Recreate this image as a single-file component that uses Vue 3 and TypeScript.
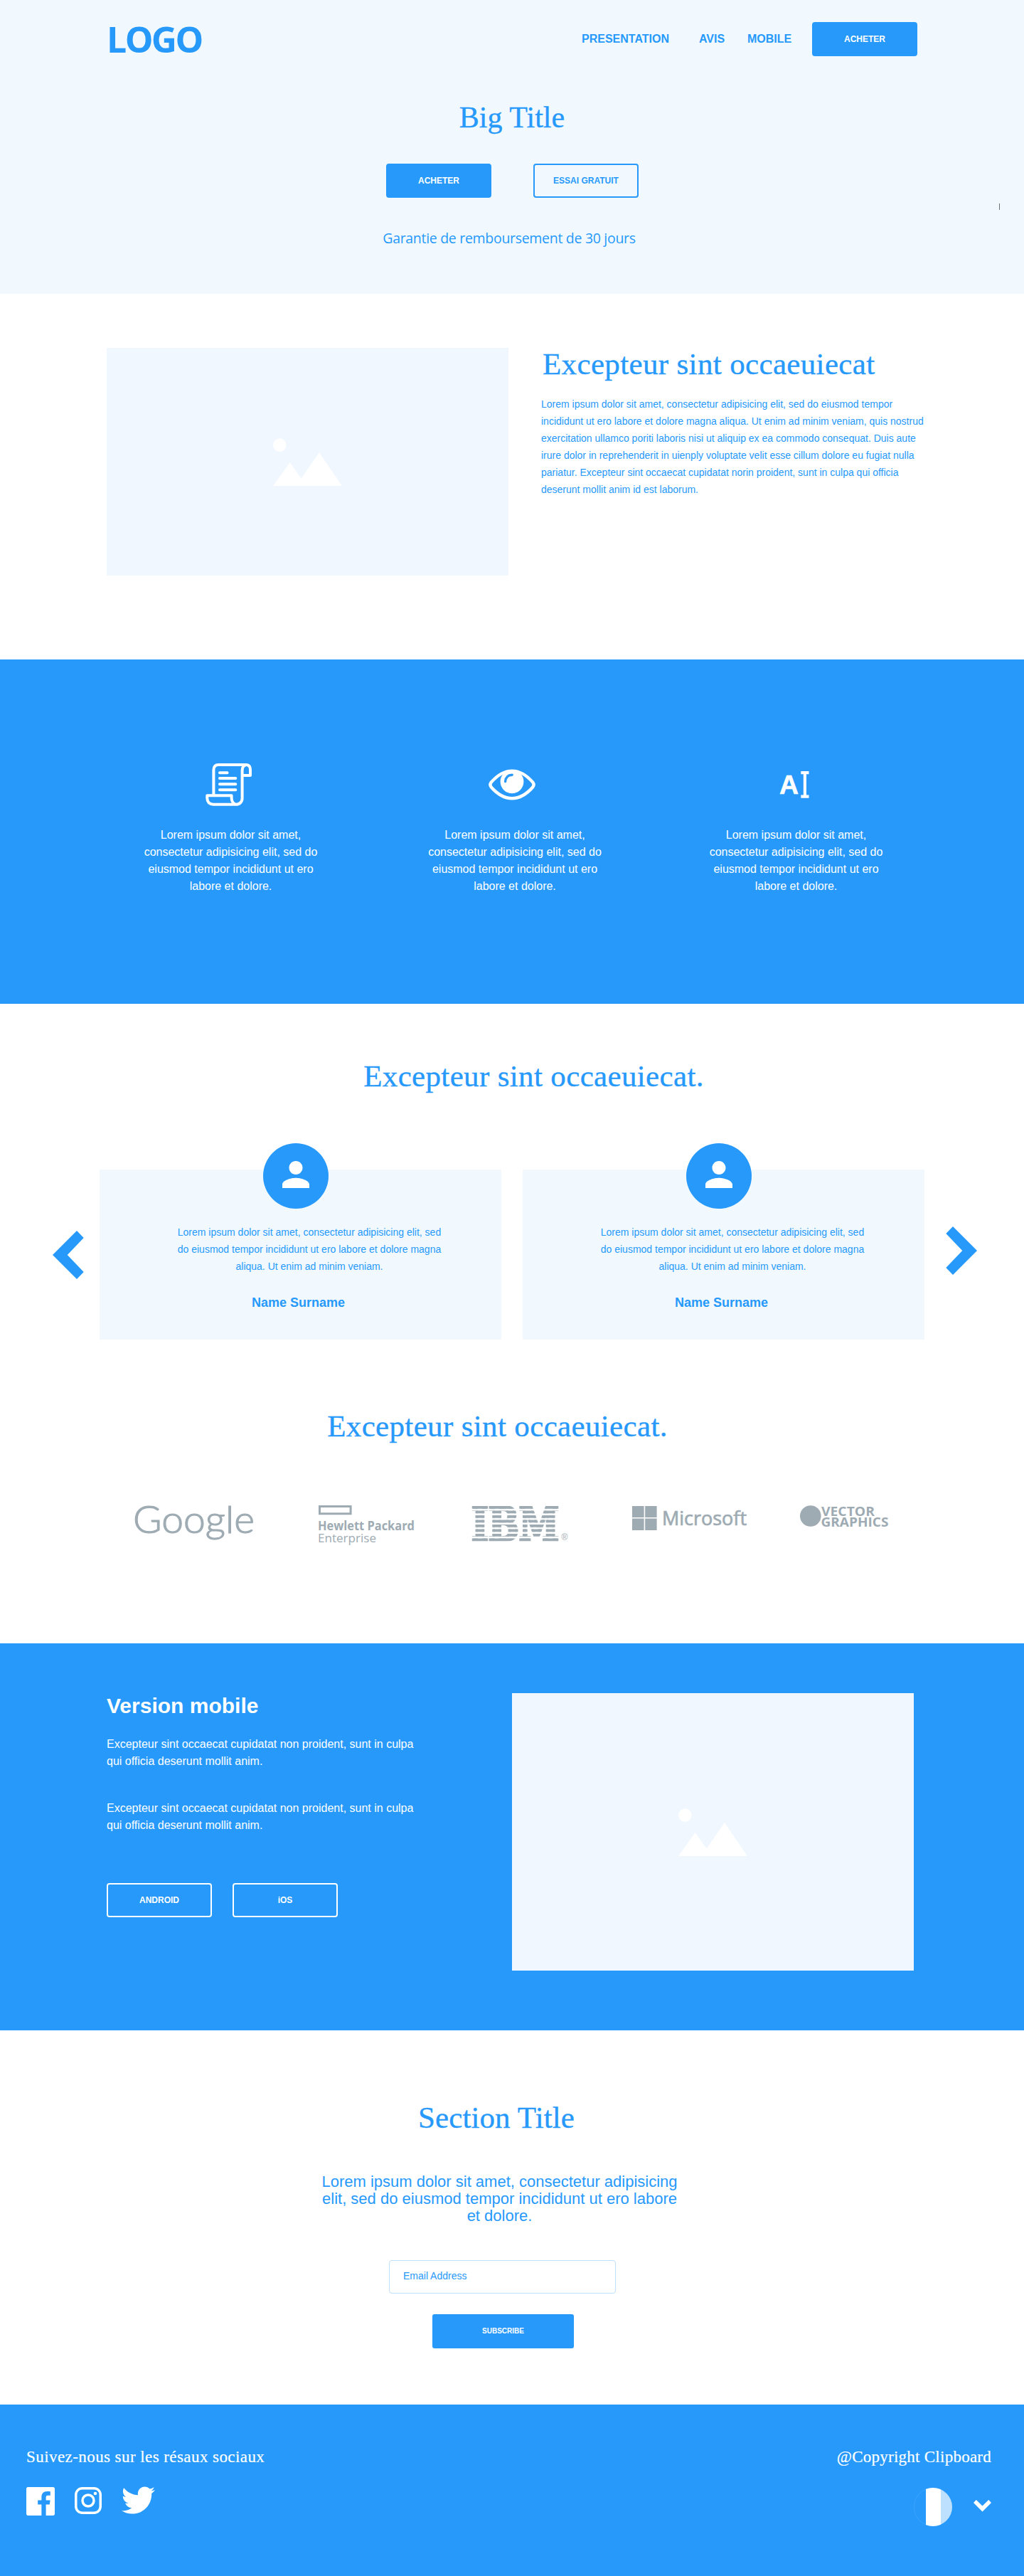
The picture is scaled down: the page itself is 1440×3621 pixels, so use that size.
<script setup lang="ts">
interface Review {
  text: string
  name: string
}

const nav: string[] = ['PRESENTATION', 'AVIS', 'MOBILE']

const intro = [
  'Lorem ipsum dolor sit amet, consectetur adipisicing elit, sed do eiusmod tempor',
  'incididunt ut ero labore et dolore magna aliqua. Ut enim ad minim veniam, quis nostrud',
  'exercitation ullamco poriti laboris nisi ut aliquip ex ea commodo consequat. Duis aute',
  'irure dolor in reprehenderit in uienply voluptate velit esse cillum dolore eu fugiat nulla',
  'pariatur. Excepteur sint occaecat cupidatat norin proident, sunt in culpa qui officia',
  'deserunt mollit anim id est laborum.',
].join('\n')

const featureText = [
  'Lorem ipsum dolor sit amet,',
  'consectetur adipisicing elit, sed do',
  'eiusmod tempor incididunt ut ero',
  'labore et dolore.',
].join('\n')

const reviewText = [
  'Lorem ipsum dolor sit amet, consectetur adipisicing elit, sed',
  'do eiusmod tempor incididunt ut ero labore et dolore magna',
  'aliqua. Ut enim ad minim veniam.',
].join('\n')

const reviews: Review[] = [
  { text: reviewText, name: 'Name Surname' },
  { text: reviewText, name: 'Name Surname' },
]

const mobileText = 'Excepteur sint occaecat cupidatat non proident, sunt in culpa\nqui officia deserunt mollit anim.'

const newsletterText = [
  'Lorem ipsum dolor sit amet, consectetur adipisicing',
  'elit, sed do eiusmod tempor incididunt ut ero labore',
  'et dolore.',
].join('\n')
</script>

<template>
  <div class="page">
    <header class="hero">
      <nav class="nav">
        <span class="logo">LOGO</span>
        <a v-for="item in nav" :key="item" class="nav-link">{{ item }}</a>
        <button class="btn solid">ACHETER</button>
      </nav>
      <h1 class="title big">Big Title</h1>
      <div class="hero-actions">
        <button class="btn solid">ACHETER</button>
        <button class="btn outline">ESSAI GRATUIT</button>
      </div>
      <p class="guarantee">Garantie de remboursement de 30 jours</p>
      <i class="caret"></i>
    </header>

    <section class="intro">
      <div class="placeholder intro-image">
        <svg width="97" height="67" viewBox="0 0 97 67" fill="#fff">
          <circle cx="9.3" cy="9.6" r="9.3" />
          <path d="M0 67 23.6 34 39.6 56.5 64.8 20 97 67z" />
        </svg>
      </div>
      <div class="intro-copy">
        <h2 class="title">Excepteur sint occaeuiecat</h2>
        <p>{{ intro }}</p>
      </div>
    </section>

    <section class="features">
      <article class="feature">
        <div class="feature-icon">
          <svg width="66" height="60" viewBox="0 0 66 60" fill="none" stroke="#fff" stroke-width="4" stroke-linejoin="round">
            <path d="M11.4 44V9.5Q11.4 2 18.5 2H57.5Q63 2.5 63 9V17H53" />
            <path d="M57.5 2Q51.6 3 51.6 10V49A8.5 8.5 0 0 1 43 57.8H11Q2.5 57 2.3 49V45.2H36.6V49Q37 56 43 57.8" />
            <path d="M20 13.2H30.6M20 21H42.3M20 29.2H42.3M20 37.2H42.3" stroke-linecap="round" />
          </svg>
        </div>
        <p>{{ featureText }}</p>
      </article>
      <article class="feature">
        <div class="feature-icon eye">
          <svg width="66" height="44" viewBox="0 0 66 44">
            <path d="M3.6 18.8C13 8 22 2.6 33 2.6S53 8 62.4 18.8Q64.8 22 62.4 25.2C53 36 44 41.2 33 41.2S13 36 3.6 25.2Q1.2 22 3.6 18.8z" fill="none" stroke="#fff" stroke-width="4.4" />
            <circle cx="33" cy="17.8" r="16.4" fill="#fff" />
            <path d="M23.6 17.6Q24.2 8.6 33.2 8.2" fill="none" stroke="#2699fb" stroke-width="3.4" stroke-linecap="round" />
          </svg>
        </div>
        <p>{{ featureText }}</p>
      </article>
      <article class="feature">
        <div class="feature-icon">
          <svg width="42" height="38" viewBox="0 0 42 38" fill="#fff">
            <text x="0" y="32" font-family="Liberation Sans, sans-serif" font-weight="700" font-size="37" stroke="#fff" stroke-width=".6" textLength="27" lengthAdjust="spacingAndGlyphs">A</text>
            <path d="M30.3 0H41.5V4.2H38V33.6H41.5V37.8H30.3V33.6H33.8V4.2H30.3z" />
          </svg>
        </div>
        <p>{{ featureText }}</p>
      </article>
    </section>

    <section class="social-proof">
      <h2 class="title reviews-title">Excepteur sint occaeuiecat.</h2>
      <div class="reviews">
        <svg class="arrow prev" width="44" height="68" viewBox="0 0 44 68" fill="#2699fb"><path d="M34 0 43.7 10 20.7 34 43.7 58 34 68 0 34z" /></svg>
        <article v-for="(review, i) in reviews" :key="i" class="card">
          <div class="avatar">
            <svg width="38" height="38" viewBox="4 4 16 16" fill="#fff"><path d="M12 12c2.21 0 4-1.79 4-4s-1.79-4-4-4-4 1.79-4 4 1.79 4 4 4zm0 2c-2.67 0-8 1.34-8 4v2h16v-2c0-2.66-5.33-4-8-4z" /></svg>
          </div>
          <p class="card-text">{{ review.text }}</p>
          <p class="card-name">{{ review.name }}</p>
        </article>
        <svg class="arrow next" width="44" height="68" viewBox="0 0 44 68" fill="#2699fb"><path d="M10 0 .3 10 23.3 34 .3 58 10 68 44 34z" /></svg>
      </div>

      <h2 class="title brands-title">Excepteur sint occaeuiecat.</h2>
      <div class="brands">
        <svg width="170" height="54" viewBox="0 0 170 54">
          <text x="-3" y="38.5" font-family="Lato, sans-serif" font-weight="300" font-size="54" stroke="#9eabb3" stroke-width="1.1" textLength="171" lengthAdjust="spacingAndGlyphs">Google</text>
        </svg>
        <svg width="140" height="60" viewBox="0 0 140 60">
          <path fill-rule="evenodd" d="M1 0H47.6V13.3H1zM4 3V10.3H44.6V3z" />
          <text x="0" y="35.2" font-family="Open Sans, sans-serif" font-weight="700" font-size="17" textLength="136" lengthAdjust="spacingAndGlyphs">Hewlett Packard</text>
          <text x="0" y="52.3" font-family="Open Sans, sans-serif" font-size="17" textLength="82" lengthAdjust="spacingAndGlyphs">Enterprise</text>
        </svg>
        <svg width="142" height="54" viewBox="0 0 142 54">
          <defs>
            <pattern id="stripes" width="142" height="6.5" patternUnits="userSpaceOnUse" patternTransform="translate(0 1)">
              <rect width="142" height="3.8" />
            </pattern>
          </defs>
          <text x="1" y="48.5" fill="url(#stripes)" stroke="url(#stripes)" stroke-width="4" font-family="DejaVu Serif, serif" font-weight="700" font-size="63.5" textLength="123" lengthAdjust="spacingAndGlyphs">IBM</text>
          <text x="127.5" y="48.5" font-family="Liberation Sans, sans-serif" font-size="12">®</text>
        </svg>
        <svg width="164" height="54" viewBox="0 0 164 54">
          <path d="M0 1H16.6V17H0zM18.2 1H34.6V17H18.2zM0 18.4H16.6V35H0zM18.2 18.4H34.6V35H18.2z" />
          <text x="42" y="28" font-family="Open Sans, sans-serif" font-weight="500" font-size="28" stroke="#9eabb3" stroke-width=".7" textLength="119" lengthAdjust="spacingAndGlyphs">Microsoft</text>
        </svg>
        <svg width="130" height="54" viewBox="0 0 130 54">
          <circle cx="14.8" cy="15" r="14.8" />
          <text x="30" y="14.8" font-family="Open Sans, sans-serif" font-weight="700" font-size="17.4" textLength="75" lengthAdjust="spacingAndGlyphs">VECTOR</text>
          <text x="29.5" y="29.8" font-family="Open Sans, sans-serif" font-weight="700" font-size="17.4" textLength="95" lengthAdjust="spacingAndGlyphs">GRAPHICS</text>
        </svg>
      </div>
    </section>

    <section class="mobile">
      <div class="mobile-copy">
        <h2>Version mobile</h2>
        <p>{{ mobileText }}</p>
        <p>{{ mobileText }}</p>
        <div class="stores">
          <button class="btn ghost">ANDROID</button>
          <button class="btn ghost">iOS</button>
        </div>
      </div>
      <div class="placeholder mobile-image">
        <svg width="97" height="67" viewBox="0 0 97 67" fill="#fff">
          <circle cx="9.3" cy="9.6" r="9.3" />
          <path d="M0 67 23.6 34 39.6 56.5 64.8 20 97 67z" />
        </svg>
      </div>
    </section>

    <section class="newsletter">
      <h2 class="title">Section Title</h2>
      <p>{{ newsletterText }}</p>
      <input class="email" type="email" placeholder="Email Address" />
      <button class="btn solid subscribe">SUBSCRIBE</button>
    </section>

    <footer class="footer">
      <div class="footer-row">
        <span class="follow">Suivez-nous sur les résaux sociaux</span>
        <span>@Copyright Clipboard</span>
      </div>
      <div class="footer-row icons">
        <div class="networks">
          <svg width="40" height="40" viewBox="0 0 24 24" fill="#fff"><path d="M22.676 0H1.324C.593 0 0 .593 0 1.324v21.352C0 23.408.593 24 1.324 24h11.494v-9.294H9.689v-3.621h3.129V8.41c0-3.099 1.894-4.785 4.659-4.785 1.325 0 2.464.097 2.796.141v3.24h-1.921c-1.5 0-1.792.721-1.792 1.771v2.311h3.584l-.465 3.63H16.56V24h6.115c.733 0 1.325-.592 1.325-1.324V1.324C24 .593 23.408 0 22.676 0" /></svg>
          <svg width="38" height="38" viewBox="0 0 38 38" fill="none" stroke="#fff" stroke-width="3.5">
            <rect x="1.75" y="1.75" width="34.5" height="34.5" rx="9" />
            <circle cx="19" cy="19" r="8" />
            <circle cx="29" cy="9" r="2.3" fill="#fff" stroke="none" />
          </svg>
          <svg width="47" height="39" viewBox="0 2.2 24 19.6" fill="#fff"><path d="M23.954 4.569c-.885.389-1.83.654-2.825.775 1.014-.611 1.794-1.574 2.163-2.723-.951.555-2.005.959-3.127 1.184-.896-.959-2.173-1.559-3.591-1.559-2.717 0-4.92 2.203-4.92 4.917 0 .39.045.765.127 1.124C7.691 8.094 4.066 6.13 1.64 3.161c-.427.722-.666 1.561-.666 2.475 0 1.71.87 3.213 2.188 4.096-.807-.026-1.566-.248-2.228-.616v.061c0 2.385 1.693 4.374 3.946 4.827-.413.111-.849.171-1.296.171-.314 0-.615-.03-.916-.086.631 1.953 2.445 3.377 4.604 3.417-1.68 1.319-3.809 2.105-6.102 2.105-.39 0-.779-.023-1.17-.067 2.189 1.394 4.768 2.209 7.557 2.209 9.054 0 13.999-7.496 13.999-13.986 0-.209 0-.42-.015-.63.961-.689 1.8-1.56 2.46-2.548l-.047-.02z" /></svg>
        </div>
        <div class="tools">
          <svg width="54" height="54" viewBox="0 0 54 54">
            <clipPath id="disc"><circle cx="27" cy="27" r="27" /></clipPath>
            <circle cx="27" cy="27" r="26.8" fill="none" stroke="#5bb2fc" stroke-width=".4" />
            <g clip-path="url(#disc)">
              <rect x="17" width="21" height="54" fill="#fff" />
              <rect x="38" width="16" height="54" fill="#bce0fd" />
            </g>
          </svg>
          <svg class="down" width="25" height="17" viewBox="0 0 25 17" fill="#fff"><path d="M3.8 0 12.5 8.5 21.2 0 25 4 12.5 16.5 0 4z" /></svg>
        </div>
      </div>
    </footer>
  </div>
</template>

<style>
body {
  margin: 0;
  background: #fff;
}
</style>

<style scoped>
.page {
  width: 1440px;
  height: 3621px;
  overflow: hidden;
  color: #2699fb;
  background: #fff;
  font-family: 'Liberation Sans', Arial, sans-serif;
  font-size: 16px;
  line-height: 24px;
}

h1,
h2,
p {
  margin: 0;
  font-weight: 400;
  white-space: pre;
}

svg {
  display: block;
  flex: none;
  overflow: visible;
}

section,
header,
footer {
  box-sizing: border-box;
}

.title {
  font-family: 'Liberation Serif', Georgia, serif;
  font-size: 43px;
  line-height: 48px;
  letter-spacing: 0.35px;
  -webkit-text-stroke: 0.35px currentColor;
}

.btn {
  box-sizing: border-box;
  width: 148px;
  height: 48px;
  padding: 0;
  border: 2px solid #2699fb;
  border-radius: 4px;
  font: 700 12px/14px 'Liberation Sans', Arial, sans-serif;
}

.solid {
  background: #2699fb;
  color: #fff;
}

.outline {
  background: transparent;
  color: #2699fb;
}

.ghost {
  background: transparent;
  border-color: #fff;
  color: #fff;
}

/* Header */
.hero {
  position: relative;
  height: 413px;
  padding-top: 31px;
  background: #f1f9ff;
  text-align: center;
}

.nav {
  display: grid;
  grid-template: 48px / 1fr 165px 68px 91px 148px;
  align-items: center;
  margin: 0 150px 0 149px;
  text-align: left;
}

.logo {
  padding: 1px 0 0 1px;
  font: 700 50px/47px 'Open Sans', 'Noto Sans', sans-serif;
  letter-spacing: -2.6px;
}

.nav-link {
  font-weight: 700;
}

.big {
  margin-top: 62px;
  font-size: 42px;
  letter-spacing: 0;
}

.hero-actions {
  display: flex;
  justify-content: center;
  gap: 59px;
  margin: 41px 0 0 1px;
}

.guarantee {
  margin: 45px 8px 0 0;
  font-family: 'Open Sans', 'Noto Sans', sans-serif;
  font-size: 19.5px;
  letter-spacing: -0.3px;
}

.caret {
  position: absolute;
  left: 1405px;
  top: 286px;
  width: 1px;
  height: 9px;
  background: #707070;
}

/* Intro */
.intro {
  display: flex;
  gap: 46px;
  height: 514px;
  padding: 76px 0 0 150px;
}

.placeholder {
  display: flex;
  align-items: center;
  justify-content: center;
  flex: none;
  width: 565px;
  background: #f0f7ff;
}

.intro-image {
  height: 320px;
}

.intro-copy {
  margin-top: -1px;
  font-size: 14px;
}

.intro-copy .title {
  margin: 0 0 20px 2px;
}

/* Features */
.features {
  display: grid;
  grid-template-columns: 400px 399px 392px;
  height: 484px;
  padding: 146px 0 0 124.5px;
  background: #2699fb;
  color: #fff;
  text-align: center;
}

.feature-icon {
  display: flex;
  align-items: center;
  justify-content: center;
  height: 60px;
  margin: 0 6px 29px 0;
}

.feature-icon.eye {
  padding-right: 2px;
}

/* Reviews and brands */
.social-proof {
  height: 899px;
  padding-top: 78px;
}

.reviews-title {
  padding-left: 61px;
  text-align: center;
}

.reviews {
  display: flex;
  height: 239px;
  margin: 107px 0 0 74px;
}

.prev {
  margin: 86px 22px 0 0;
}

.next {
  margin-top: 80px;
}

.card {
  position: relative;
  box-sizing: border-box;
  width: 565px;
  margin-right: 30px;
  padding-top: 76px;
  background: #f1f9ff;
  text-align: center;
}

.avatar {
  position: absolute;
  left: 230px;
  top: -37px;
  display: flex;
  align-items: center;
  justify-content: center;
  width: 92px;
  height: 92px;
  border-radius: 50%;
  background: #2699fb;
}

.avatar svg {
  margin-bottom: 5px;
}

.card-text {
  padding-left: 25px;
  font-size: 14px;
}

.card-name {
  margin: 27px 6px 0 0;
  font-size: 18px;
  font-weight: 700;
}

.brands-title {
  margin-top: 98px;
  padding-right: 41px;
  text-align: center;
}

.brands {
  display: grid;
  grid-template-columns: 257px 215px 227px 236px 130px;
  margin: 87px 0 0 190px;
  fill: #9eabb3;
}

/* Mobile */
.mobile {
  display: flex;
  height: 544px;
  padding: 70px 0 0 150px;
  background: #2699fb;
  color: #fff;
}

.mobile-copy {
  width: 570px;
}

.mobile-copy h2 {
  margin-bottom: 24px;
  font-size: 30px;
  font-weight: 700;
  line-height: 36px;
}

.mobile-copy p + p {
  margin-top: 42px;
}

.stores {
  display: flex;
  gap: 29px;
  margin-top: 69px;
}

.mobile-image {
  height: 390px;
}

/* Newsletter */
.newsletter {
  display: flex;
  flex-direction: column;
  align-items: center;
  height: 526px;
  padding: 99px 35px 0 0;
  text-align: center;
}

.newsletter .title {
  margin-right: 9px;
  letter-spacing: 0.1px;
}

.newsletter p {
  margin-top: 54px;
  font-size: 22px;
}

.email {
  box-sizing: border-box;
  width: 319px;
  height: 47px;
  margin: 50px 0 0 8px;
  padding: 0 19px 3px;
  border: 1px solid #bce0fd;
  border-radius: 4px;
  background: #fff;
  font: 14px 'Liberation Sans', Arial, sans-serif;
}

.email::placeholder {
  color: #2699fb;
  opacity: 1;
}

.subscribe {
  width: 199px;
  margin: 29px 0 0 10px;
  border-radius: 3px;
  font-size: 10px;
}

/* Footer */
.footer {
  height: 241px;
  padding: 60px 46px 0 37px;
  background: #2699fb;
  color: #fff;
  font: 23px/28px 'Liberation Serif', Georgia, serif;
  letter-spacing: 0.25px;
}

.footer-row {
  display: flex;
  justify-content: space-between;
}

.footer-row span {
  -webkit-text-stroke: 0.2px currentColor;
}

.follow {
  letter-spacing: 0.43px;
}

.icons {
  margin-top: 27px;
}

.networks {
  display: flex;
  gap: 28px;
}

.networks svg:nth-child(-n + 2) {
  margin-top: 1px;
}

.tools {
  display: flex;
  gap: 30px;
  margin-top: 2px;
}

.down {
  margin-top: 17px;
}
</style>
